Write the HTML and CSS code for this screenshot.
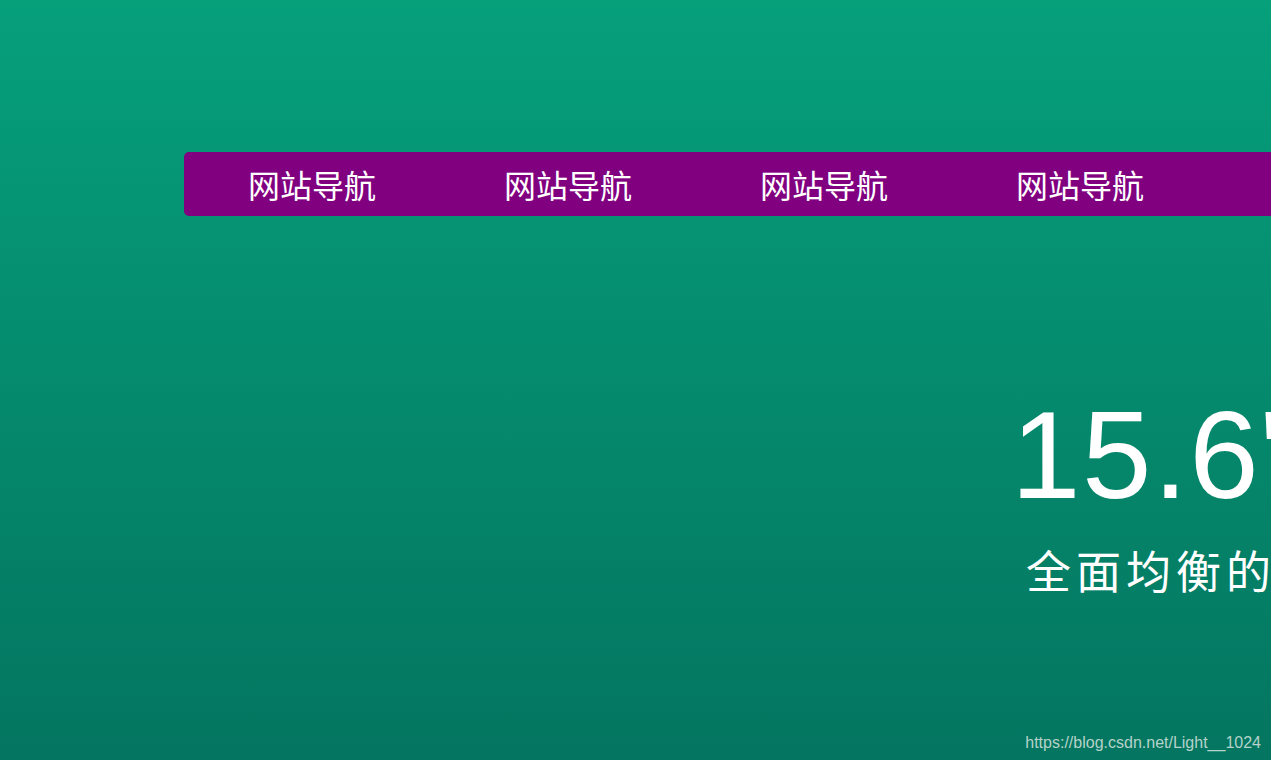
FILE: index.html
```html
<!DOCTYPE html>
<html lang="zh-CN">
<head>
<meta charset="utf-8">
<title>网站导航</title>
<link rel="stylesheet" href="styles.css">
</head>
<body>
<div class="page">
  <nav class="nav">
    <a class="nav-item" href="#">网站导航</a>
    <a class="nav-item" href="#">网站导航</a>
    <a class="nav-item" href="#">网站导航</a>
    <a class="nav-item" href="#">网站导航</a>
  </nav>
  <section class="hero">
    <div class="hero-num">15.6"</div>
    <div class="hero-sub">全面均衡的</div>
  </section>
  <div class="watermark">https://blog.csdn.net/Light__1024</div>
</div>
</body>
</html>
```
FILE: styles.css
```css
html, body {
  margin: 0;
  padding: 0;
  width: 1271px;
  height: 760px;
  overflow: hidden;
}
body {
  font-family: "Noto Sans CJK SC", "Liberation Sans", sans-serif;
}
.page {
  position: relative;
  width: 1271px;
  height: 760px;
  overflow: hidden;
  background: linear-gradient(to bottom, #06a07b 0%, #047560 100%);
  padding-top: 152px;
  box-sizing: border-box;
}
.nav {
  display: flex;
  margin-left: 184px;
  width: 1200px;
  height: 64px;
  background: #800080;
  border-radius: 5px;
}
.nav-item {
  width: 256px;
  flex: 0 0 256px;
  text-align: center;
  line-height: 64px;
  font-size: 32px;
  color: #ffffff;
  text-decoration: none;
  font-family: "Noto Sans CJK SC", sans-serif;
}
.hero {
  margin-top: 176px;
  white-space: nowrap;
}
.hero-num {
  margin-left: 1011px;
  font-family: "Liberation Sans", Arial, sans-serif;
  font-size: 125px;
  line-height: 125px;
  letter-spacing: 1.5px;
  color: #ffffff;
}
.hero-sub {
  margin-top: 30px;
  margin-left: 1026px;
  font-family: "Noto Sans CJK SC", sans-serif;
  font-size: 45px;
  line-height: 45px;
  letter-spacing: 5px;
  color: #ffffff;
}
.watermark {
  position: absolute;
  right: 10px;
  bottom: 8px;
  font-family: "Liberation Sans", Arial, sans-serif;
  font-size: 16px;
  color: rgba(215, 228, 223, 0.85);
}
```
